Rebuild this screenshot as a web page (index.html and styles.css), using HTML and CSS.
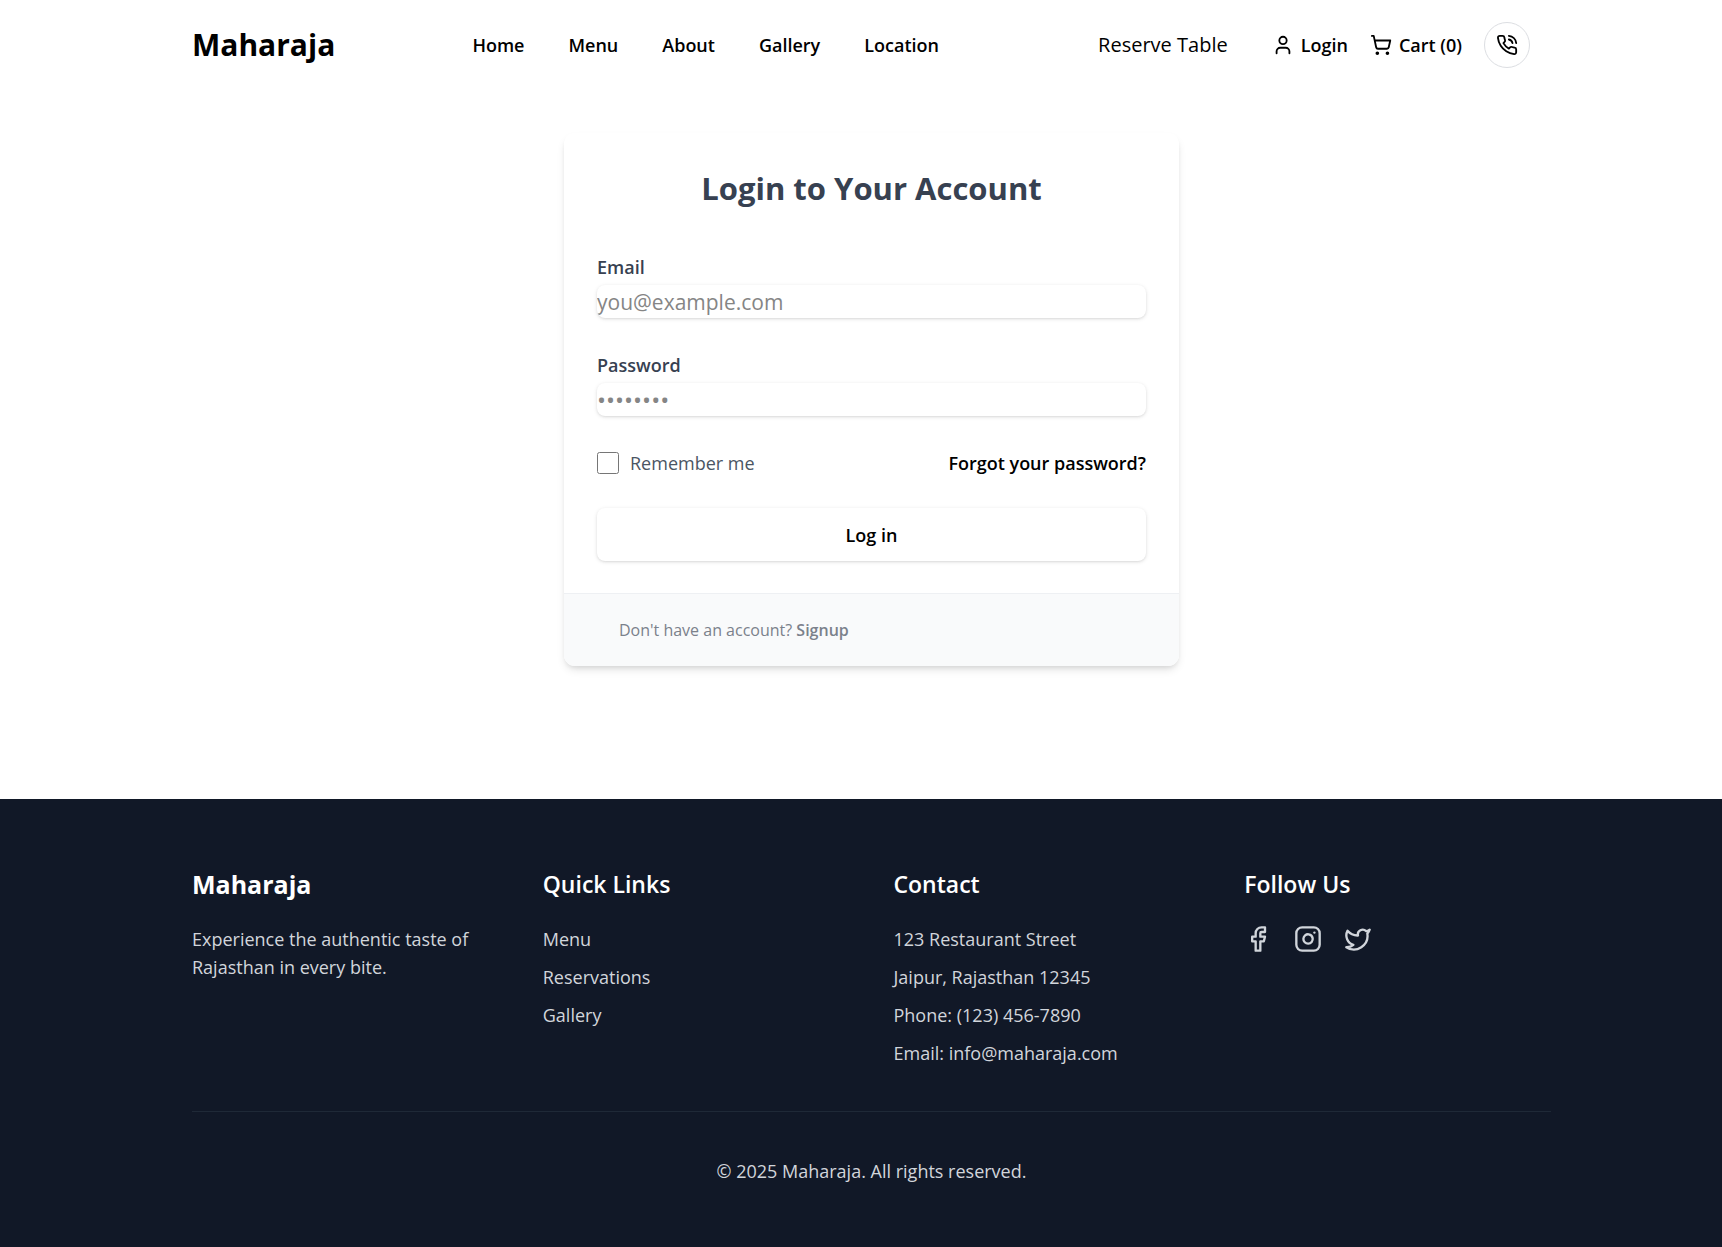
FILE: index.html
```html
<!DOCTYPE html>
<html lang="en">
<head>
<meta charset="utf-8">
<title>Login - Maharaja</title>
<link rel="stylesheet" href="styles.css">
</head>
<body>
<header class="header">
  <a class="logo" href="#">Maharaja</a>
  <nav class="nav">
    <a href="#">Home</a>
    <a href="#">Menu</a>
    <a href="#">About</a>
    <a href="#">Gallery</a>
    <a href="#">Location</a>
  </nav>
  <div class="actions">
    <button class="reserve" type="button">Reserve Table</button>
    <a class="action" href="#">
      <svg class="icon" viewBox="0 0 24 24"><path d="M19 21v-2a4 4 0 0 0-4-4H9a4 4 0 0 0-4 4v2"/><circle cx="12" cy="7" r="4"/></svg>
      <span>Login</span>
    </a>
    <a class="action" href="#">
      <svg class="icon" viewBox="0 0 24 24"><circle cx="8" cy="21" r="1"/><circle cx="19" cy="21" r="1"/><path d="M2.05 2.05h2l2.66 12.42a2 2 0 0 0 2 1.58h9.78a2 2 0 0 0 1.95-1.57l1.65-7.43H5.12"/></svg>
      <span>Cart (0)</span>
    </a>
    <a class="call" href="#" aria-label="Call us">
      <svg class="icon" viewBox="0 0 24 24"><path d="M22 16.92v3a2 2 0 0 1-2.18 2 19.79 19.79 0 0 1-8.63-3.07 19.5 19.5 0 0 1-6-6 19.79 19.79 0 0 1-3.07-8.67A2 2 0 0 1 4.11 2h3a2 2 0 0 1 2 1.72 12.84 12.84 0 0 0 .7 2.81 2 2 0 0 1-.45 2.11L8.09 9.91a16 16 0 0 0 6 6l1.27-1.27a2 2 0 0 1 2.11-.45 12.84 12.84 0 0 0 2.81.7A2 2 0 0 1 22 16.92z"/><path d="M14.05 2a9 9 0 0 1 8 7.94"/><path d="M14.05 6A5 5 0 0 1 18 10"/></svg>
    </a>
  </div>
</header>

<main class="main">
  <section class="card">
    <form class="form">
      <h1 class="title">Login to Your Account</h1>
      <div class="field">
        <label for="email">Email</label>
        <input class="input" id="email" type="email" placeholder="you@example.com">
      </div>
      <div class="field">
        <label for="password">Password</label>
        <input class="input input-password" id="password" type="password" placeholder="••••••••">
      </div>
      <div class="options">
        <label class="remember" for="remember"><input class="check" id="remember" type="checkbox">Remember me</label>
        <a class="forgot" href="#">Forgot your password?</a>
      </div>
      <button class="submit" type="submit">Log in</button>
    </form>
    <p class="signup">Don't have an account? <a href="#">Signup</a></p>
  </section>
</main>

<footer class="footer">
  <div class="columns">
    <section>
      <h2 class="brand">Maharaja</h2>
      <p>Experience the authentic taste of Rajasthan in every bite.</p>
    </section>
    <section>
      <h3 class="heading">Quick Links</h3>
      <ul class="list">
        <li><a href="#">Menu</a></li>
        <li><a href="#">Reservations</a></li>
        <li><a href="#">Gallery</a></li>
      </ul>
    </section>
    <section>
      <h3 class="heading">Contact</h3>
      <ul class="list">
        <li>123 Restaurant Street</li>
        <li>Jaipur, Rajasthan 12345</li>
        <li>Phone: (123) 456-7890</li>
        <li>Email: info@maharaja.com</li>
      </ul>
    </section>
    <section>
      <h3 class="heading">Follow Us</h3>
      <div class="social">
        <a href="#" aria-label="Facebook"><svg class="icon" viewBox="0 0 24 24"><path d="M18 2h-3a5 5 0 0 0-5 5v3H7v4h3v8h4v-8h3l1-4h-4V7a1 1 0 0 1 1-1h3z"/></svg></a>
        <a href="#" aria-label="Instagram"><svg class="icon" viewBox="0 0 24 24"><rect x="2" y="2" width="20" height="20" rx="5"/><path d="M16 11.37A4 4 0 1 1 12.63 8 4 4 0 0 1 16 11.37z"/><path d="M17.5 6.5h.01"/></svg></a>
        <a href="#" aria-label="Twitter"><svg class="icon" viewBox="0 0 24 24"><path d="M22 4s-.7 2.1-2 3.4c1.6 10-9.4 17.3-18 11.6 2.2.1 4.4-.6 6-2C3 15.5.5 9.6 3 5c2.2 2.6 5.6 4.1 9 4-.9-4.2 4-6.6 7-3.8 1.1 0 3-1.2 3-1.2z"/></svg></a>
      </div>
    </section>
  </div>
  <p class="copyright">© 2025 Maharaja. All rights reserved.</p>
</footer>
</body>
</html>
```

FILE: styles.css
```css
* {
  box-sizing: border-box;
}

body {
  margin: 0;
  display: flex;
  flex-direction: column;
  min-height: 100vh;
  background: #fff;
  color: #000;
  font-family: "Open Sans", "Noto Sans", sans-serif;
  font-size: 18px;
  line-height: 28px;
}

h1, h2, h3, p, ul {
  margin: 0;
  padding: 0;
}

a {
  color: inherit;
  text-decoration: none;
}

button, input {
  border: 0;
  background: #fff;
  color: inherit;
  font: inherit;
}

.icon {
  display: block;
  width: 22px;
  height: 22px;
  fill: none;
  stroke: currentColor;
  stroke-width: 2;
  stroke-linecap: round;
  stroke-linejoin: round;
}

/* Header */
.header {
  display: flex;
  align-items: center;
  justify-content: space-between;
  height: 90px;
  padding: 0 192px;
}

.logo {
  font-size: 30px;
  font-weight: 700;
  line-height: 44px;
}

.nav {
  display: flex;
  gap: 44px;
  font-weight: 600;
}

.actions {
  display: flex;
  align-items: center;
  gap: 22px;
}

.reserve {
  padding: 0 22px;
  font-size: 20px;
}

.action {
  display: flex;
  align-items: center;
  gap: 7px;
  font-weight: 600;
}

.call {
  padding: 11px;
  border: 1px solid #dcdee2;
  border-radius: 50%;
}

/* Login card */
.main {
  flex: 1;
  padding: 43px 0 131px 21px;
}

.card {
  max-width: 615px;
  margin: 0 auto;
  overflow: hidden;
  border-radius: 11px;
  box-shadow: 0 5px 8px -1px rgba(0, 0, 0, 0.1), 0 3px 5px -2px rgba(0, 0, 0, 0.1);
}

.form {
  padding: 33px 33px 32px;
}

.title {
  margin-bottom: 43px;
  color: #374151;
  font-size: 31px;
  font-weight: 700;
  line-height: 44px;
  text-align: center;
}

.field {
  display: flex;
  flex-direction: column;
  gap: 4px;
  margin-bottom: 33px;
  color: #374151;
  font-weight: 600;
}

.input {
  width: 100%;
  height: 33px;
  padding: 0;
  border-radius: 8px;
  box-shadow: 0 1px 4px rgba(0, 0, 0, 0.1), 0 1px 3px -1px rgba(0, 0, 0, 0.15);
  font-size: 21px;
  font-weight: 400;
}

.input::placeholder {
  color: #858585;
}

.input-password {
  font-size: 24px;
}

.options {
  display: flex;
  align-items: center;
  justify-content: space-between;
  margin-bottom: 31px;
}

.remember {
  display: flex;
  align-items: center;
  gap: 11px;
  color: #4b5563;
}

.check {
  width: 22px;
  height: 22px;
  margin: 0;
}

.forgot {
  font-weight: 600;
}

.submit {
  width: 100%;
  height: 53px;
  border-radius: 8px;
  box-shadow: 0 1px 4px rgba(0, 0, 0, 0.1), 0 1px 3px -1px rgba(0, 0, 0, 0.15);
  font-weight: 600;
}

.signup {
  padding: 22px 55px;
  border-top: 1px solid #eef0f3;
  background: #f9fafb;
  color: #7b818b;
  font-size: 16px;
}

.signup a {
  font-weight: 600;
}

/* Footer */
.footer {
  padding: 66px 171px 62px 192px;
  background: #111827;
  color: #d1d5db;
}

.columns {
  display: grid;
  grid-template-columns: repeat(4, 1fr);
  gap: 44px;
}

.brand, .heading {
  margin-bottom: 22px;
  color: #fff;
  font-size: 23px;
  font-weight: 600;
  line-height: 38px;
}

.brand {
  font-size: 25px;
  font-weight: 700;
}

.list {
  display: grid;
  gap: 10px;
  list-style: none;
}

.social {
  display: flex;
  gap: 22px;
}

.social .icon {
  width: 28px;
  height: 28px;
}

.copyright {
  margin-top: 44px;
  padding-top: 45px;
  border-top: 1px solid #1f2937;
  text-align: center;
}
```
